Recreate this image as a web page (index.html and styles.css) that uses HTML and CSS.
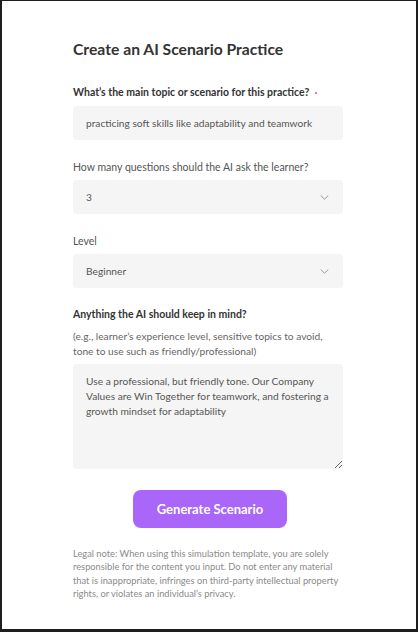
FILE: index.html
```html
<!DOCTYPE html>
<html lang="en">
<head>
<meta charset="utf-8">
<title>Create an AI Scenario Practice</title>
<link rel="stylesheet" href="styles.css">
</head>
<body>
<div class="frame">
  <form class="form">
    <h1 class="title">Create an AI Scenario Practice</h1>

    <div class="field field-first">
      <label class="label label-strong">What’s the main topic or scenario for this practice? <span class="req"></span></label>
      <input class="control" type="text" value="practicing soft skills like adaptability and teamwork">
    </div>

    <div class="field">
      <label class="label">How many questions should the AI ask the learner?</label>
      <div class="control select">
        <span>3</span>
        <svg class="chev" width="9" height="5" viewBox="0 0 9 5"><path d="M1 0.8l3.5 3.4 3.5-3.4" fill="none" stroke="#9a9a9a" stroke-width="1" stroke-linecap="round" stroke-linejoin="round"/></svg>
      </div>
    </div>

    <div class="field field-level">
      <label class="label">Level</label>
      <div class="control select">
        <span>Beginner</span>
        <svg class="chev" width="9" height="5" viewBox="0 0 9 5"><path d="M1 0.8l3.5 3.4 3.5-3.4" fill="none" stroke="#9a9a9a" stroke-width="1" stroke-linecap="round" stroke-linejoin="round"/></svg>
      </div>
    </div>

    <div class="field field-notes">
      <label class="label label-strong">Anything the AI should keep in mind?</label>
      <p class="hint">(e.g., learner’s experience level, sensitive topics to avoid, tone to use such as friendly/professional)</p>
      <textarea class="control area">Use a professional, but friendly tone. Our Company Values are Win Together for teamwork, and fostering a growth mindset for adaptability</textarea>
    </div>

    <div class="actions">
      <button class="btn" type="button">Generate Scenario</button>
    </div>

    <p class="legal">Legal note: When using this simulation template, you are solely responsible for the content you input. Do not enter any material that is inappropriate, infringes on third-party intellectual property rights, or violates an individual’s privacy.</p>
  </form>
</div>
</body>
</html>
```

FILE: styles.css
```css
* { box-sizing: border-box; }
html, body { margin: 0; padding: 0; background: #fff; }
body { font-family: "Lato", "Liberation Sans", sans-serif; color: #333; }

.frame {
  width: 418px;
  height: 632px;
  border-style: solid;
  border-color: #1e1e1e;
  border-width: 1px 2px 3px 2px;
  padding: 38px 73px 0 71px;
  overflow: hidden;
}

.form { display: flex; flex-direction: column; width: 270px; }

.title {
  margin: 0 0 26px;
  font-size: 15.7px;
  line-height: 20px;
  font-weight: 700;
  color: #333;
}

.field { display: flex; flex-direction: column; gap: 6px; margin-bottom: 20px; }
.field-first { gap: 7px; }
.field-level { margin-bottom: 19px; }

.label {
  font-size: 10.5px;
  line-height: 14px;
  color: #555;
  font-weight: 400;
}
.label-strong { font-weight: 700; color: #333; }
.req {
  display: inline-block;
  width: 2px; height: 2px;
  border-radius: 50%;
  background: #a855f7;
  vertical-align: middle;
  margin-left: 3px;
}

.control {
  width: 270px;
  height: 34px;
  border: none;
  border-radius: 4px;
  background: #f5f5f5;
  font-family: inherit;
  font-size: 10.2px;
  color: #555;
  padding: 0 13px;
  outline: none;
}
.select {
  display: flex;
  align-items: center;
  justify-content: space-between;
  padding-right: 14px;
}

.field-notes { gap: 0; margin-bottom: 21px; }
.field-notes .label { margin-bottom: 8px; }
.hint {
  margin: 0 0 5px;
  font-size: 10.2px;
  line-height: 15px;
  color: #666;
}
.area {
  height: 105px;
  padding: 10px 5px 10px 13px;
  line-height: 15px;
  resize: vertical;
}

.actions { display: flex; justify-content: center; padding-left: 4px; margin-bottom: 19px; }
.btn {
  width: 154px;
  height: 38px;
  border: none;
  border-radius: 8px;
  background: #a966f9;
  color: #fff;
  font-family: inherit;
  font-size: 13px;
  font-weight: 700;
}

.legal {
  margin: 0;
  font-size: 9.3px;
  line-height: 13.3px;
  color: #8a8a8a;
}
```
